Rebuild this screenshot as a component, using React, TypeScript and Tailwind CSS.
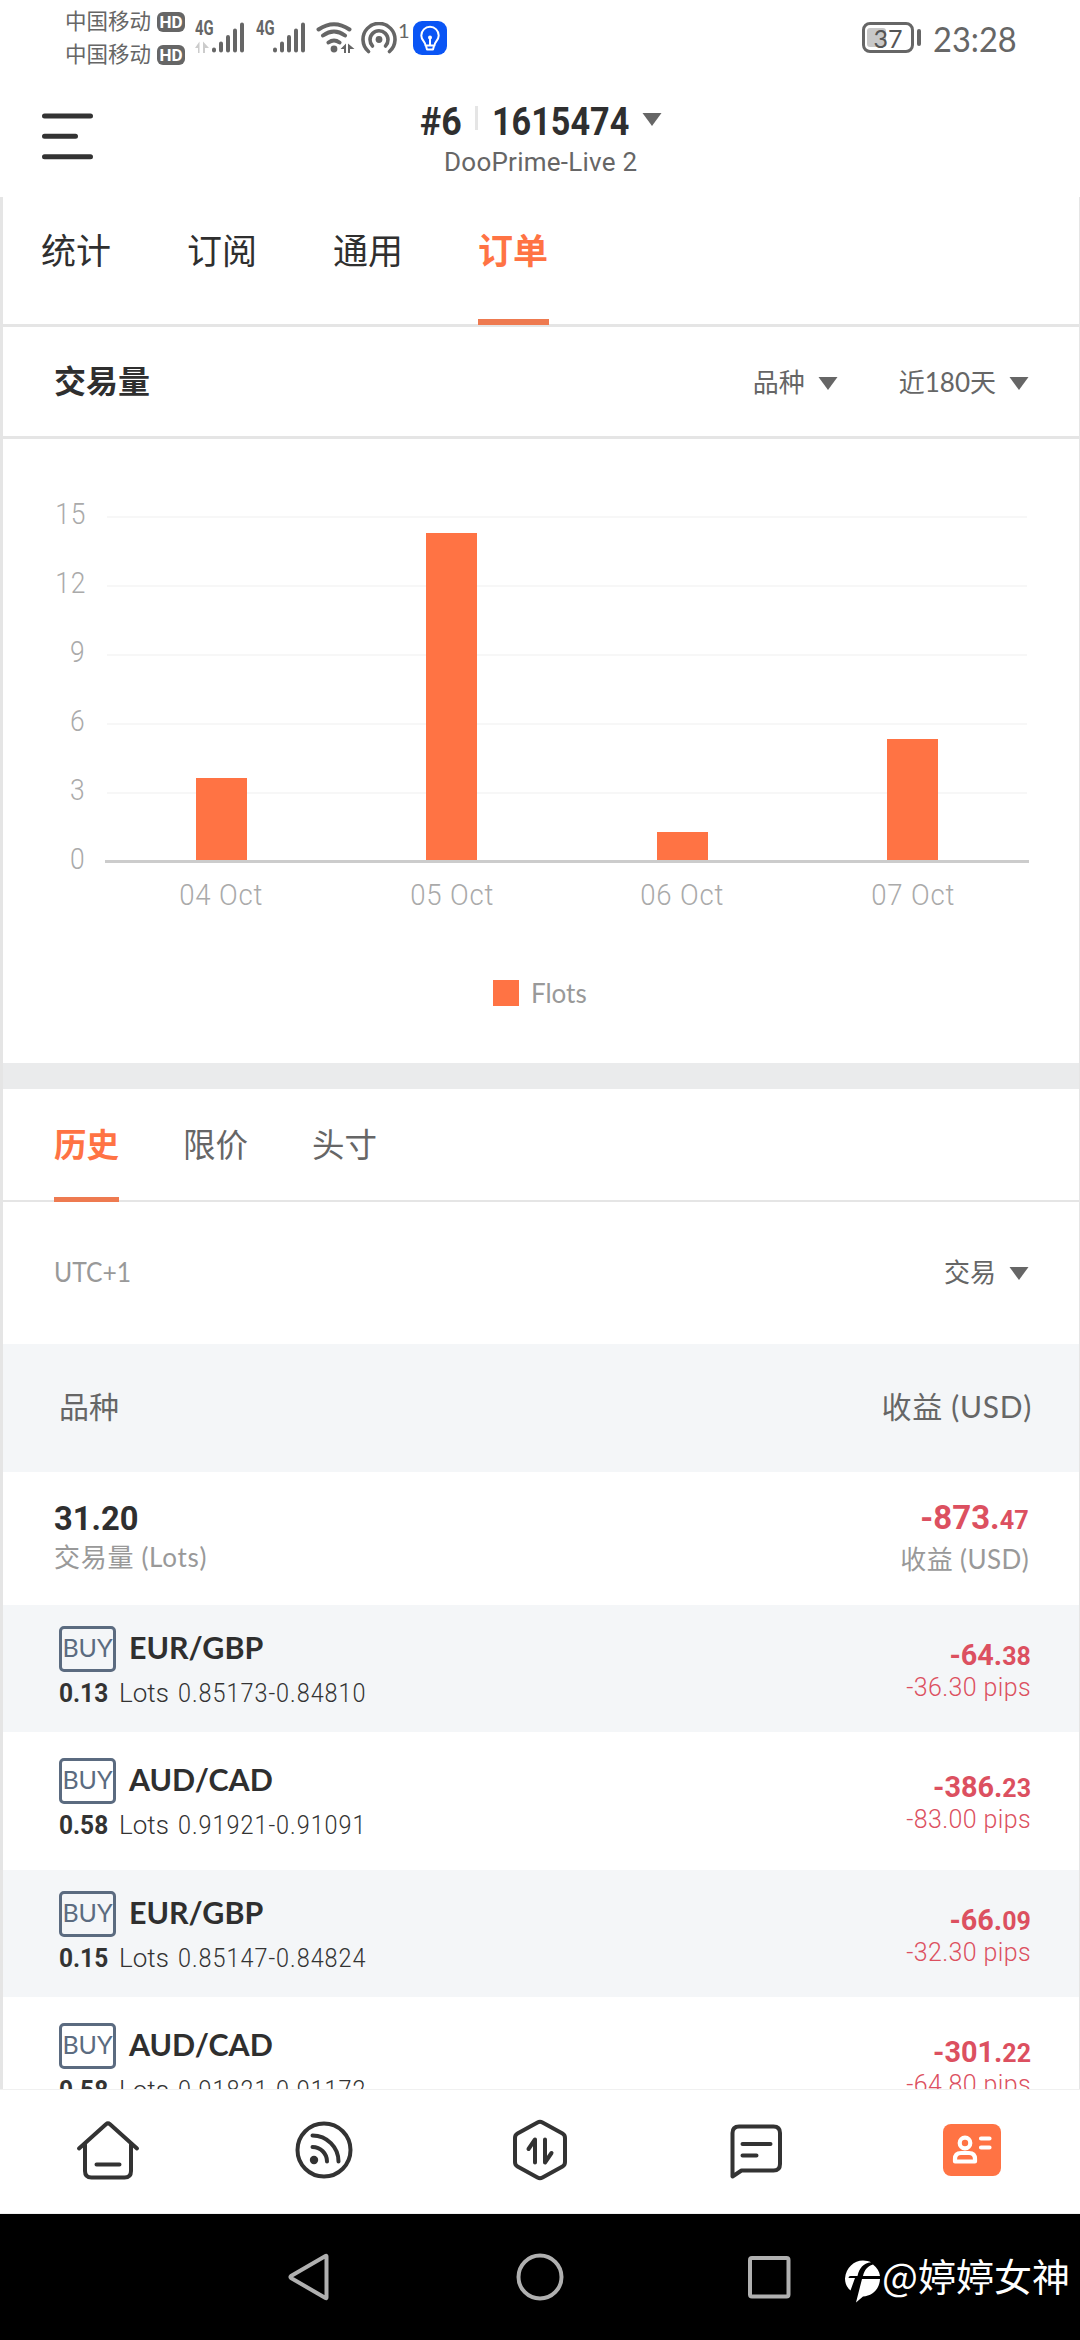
import type { ReactNode } from "react";

const DIN = "font-['Roboto','Noto_Sans_CJK_SC',sans-serif]";
const GEO = "font-['Lato','Noto_Sans_CJK_SC',sans-serif]";

function Caret() {
  return (
    <svg width="20" height="13" viewBox="0 0 20 13" className="shrink-0">
      <path d="M.5 0h19L10 13z" fill="#666" />
    </svg>
  );
}

function Carrier() {
  return (
    <div className="flex h-[33px] items-center">
      <span className="w-[92px] text-[21.5px] leading-[33px] text-[#666]">中国移动</span>
      <span className="flex h-5 w-7 items-center justify-center rounded-[6px] bg-[#666] font-['Roboto',sans-serif] text-[17px] font-bold leading-5 text-white">
        HD
      </span>
    </div>
  );
}

function Signal({ arrows }: { arrows?: boolean }) {
  return (
    <div className="relative h-8 w-[50px]">
      <span className="absolute -top-px left-0 origin-left scale-x-[0.74] font-['Roboto',sans-serif] text-[20px] font-bold leading-[15px] text-[#666]">
        4G
      </span>
      <svg width="50" height="32" viewBox="0 0 50 32" className="absolute left-0 top-0">
        {arrows && <path d="M0 26l4.500-6.500V31H3v-5zM8 19.500l6 6.500H10v5H8z" fill="#ccc" />}
        <g stroke="#666" strokeWidth="4" strokeLinecap="round">
          <path d="M19 27.500v1M26 21.500v7M33 15v13.500M40 8.500v20M47 2.500v26" />
        </g>
      </svg>
    </div>
  );
}

function StatusBar() {
  return (
    <div className={`${GEO} flex h-[75px] items-start pl-[65px]`}>
      <div className="w-[130px] pt-[5px]">
        <Carrier />
        <Carrier />
      </div>
      <div className="flex pt-[22px]">
        <Signal arrows />
        <div className="w-[11px]" />
        <Signal />
        <svg width="40" height="32" viewBox="0 0 40 32" className="ml-[10px]">
          <g fill="none" stroke="#666" strokeWidth="4" strokeLinecap="round">
            <path d="M2.500 7.500Q18 -3 33.500 7.500M7 13.500Q18 5.500 29 13.500M12.500 20.500Q18 16.500 23.500 20.500" />
          </g>
          <circle cx="18" cy="27" r="3.400" fill="#666" />
          <path d="M24.500 27l5.500-5.500V31H28v-4zM32 21.500l6.500 5.500H34v4h-2z" fill="#666" />
        </svg>
        <svg width="38" height="32" viewBox="0 0 38 32" className="ml-[4px]">
          <g fill="none" stroke="#666" strokeWidth="3.600" strokeLinecap="round">
            <path d="M8.500 29.500A16 16 0 1 1 29.500 29.500" />
            <path d="M12.500 24A9 9 0 1 1 25.500 24" />
          </g>
          <circle cx="19" cy="17.500" r="3.400" fill="#666" />
        </svg>
        <span className="w-[15px] text-[20px] leading-[16px] text-[#666]">1</span>
        <svg width="34" height="34" viewBox="0 0 34 34" className="-mt-px">
          <rect width="34" height="34" rx="9" fill="#0a55f5" />
          <g fill="none" stroke="#fff" strokeWidth="2" strokeLinecap="round" strokeLinejoin="round">
            <path d="M12.500 24.500C12.500 20.500 8.300 19.500 8.300 14.500a8.700 8.700 0 0 1 17.400 0c0 5-4.200 6-4.200 10zM13 25l1 3.500h6l1-3.500M17 17.500v6" />
          </g>
          <circle cx="17" cy="16.500" r="2" fill="#fff" />
        </svg>
      </div>
      <div className="ml-auto flex pr-[61px] pt-[22px]">
        <div className="relative h-[31px] w-[52px] rounded-[8px] border-[3px] border-[#666]">
          <div className="absolute left-[2px] top-[3px] h-[19px] w-[19px] rounded-[3px] bg-[#c8c8c8]" />
          <span className="absolute inset-0 text-center text-[25px] leading-[26px] text-[#555]">37</span>
        </div>
        <div className="ml-[3px] mt-[7px] h-[17px] w-1 rounded-[2px] bg-[#666]" />
        <span className="-mt-px ml-3 w-[86px] origin-left scale-x-[0.93] whitespace-nowrap text-[35px] leading-[34px] text-[#666]">
          23:28
        </span>
      </div>
    </div>
  );
}

function Header() {
  return (
    <div className={`${DIN} relative flex h-[122px] items-start justify-between`}>
      <svg width="51" height="48" viewBox="0 0 51 48" className="ml-[42px] mt-[37px]">
        <path d="M2.500 4h46M2.500 24.300h31M2.500 44.700h46" stroke="#333" strokeWidth="5" strokeLinecap="round" />
      </svg>
      <div className="absolute left-[420px] top-[27px] flex w-[250px] flex-col">
        <div className="flex h-[40px] items-center text-[38px] font-bold leading-[40px] text-[#2f2f2f]">
          <span className="w-[55px] origin-left scale-x-[0.94]">#6</span>
          <span className="-mt-2 h-6 w-[3px] bg-[#e5e5e5]" />
          <span className="ml-[14px] w-[150px] origin-left scale-x-[0.9]">1615474</span>
          <span className="-mt-1.5">
            <Caret />
          </span>
        </div>
        <span className="ml-6 mt-[4px] whitespace-nowrap text-[26px] leading-8 tracking-[0.25px] text-[#666]">
          DooPrime-Live 2
        </span>
      </div>
    </div>
  );
}

const TABS = ["统计", "订阅", "通用", "订单"];

function MainTabs() {
  return (
    <div className={`${GEO} flex h-[130px] shrink-0 gap-[76px] whitespace-nowrap border-b-[3px] border-[#e5e5e5] pl-[37px] text-[35px] leading-[50px]`}>
      {TABS.map((t, i) => (
        <div
          key={t}
          className={
            i === 3
              ? "h-[128px] w-[71px] border-b-[6px] border-[#ee7a50] pt-[28px] font-bold text-[#ff7344]"
              : "h-[128px] w-[70px] pl-px pt-[28px] text-[#2f2f2f]"
          }
        >
          {t}
        </div>
      ))}
    </div>
  );
}

function Filter({ children }: { children: ReactNode }) {
  return (
    <div className="flex items-center gap-[13px] text-[26px] leading-[40px] text-[#666]">
      <span>{children}</span>
      <span className="mt-[3px]">
        <Caret />
      </span>
    </div>
  );
}

const BARS = [
  { label: "04 Oct", h: 82 },
  { label: "05 Oct", h: 327 },
  { label: "06 Oct", h: 28 },
  { label: "07 Oct", h: 121 },
];

function Chart() {
  return (
    <div className="h-[624px] shrink-0">
      <div className={`${DIN} flex pt-[52px] text-[30px] font-light text-[#aaa]`}>
        <div className="flex w-[82px] flex-col items-end">
          {["15", "12", "9", "6", "3", "0"].map((n) => (
            <span key={n} className="-mr-px block h-[69px] origin-right scale-x-[0.88] leading-[46px] tracking-[1px]">
              {n}
            </span>
          ))}
        </div>
        <div className="ml-[20px] mt-[25px] w-[924px]">
          <div className="relative h-[347px] border-b-[3px] border-[#ccc]">
            <div className="mx-[2px]">
              {[0, 1, 2, 3, 4].map((n) => (
                <div key={n} className="h-[69px] border-t-2 border-[#f7f7f7]" />
              ))}
            </div>
            <div className="absolute inset-0 flex items-end px-[1px]">
              {BARS.map((b) => (
                <div key={b.label} className="flex flex-1 justify-center">
                  <div className="w-[51px] bg-[#ff7344]" style={{ height: b.h }} />
                </div>
              ))}
            </div>
          </div>
          <div className="mt-[12px] flex px-[1px] text-center leading-[40px]">
            {BARS.map((b) => (
              <span key={b.label} className="flex-1 scale-x-[0.92] tracking-[0.9px]">
                {b.label}
              </span>
            ))}
          </div>
        </div>
      </div>
      <div className={`${GEO} mt-[58px] flex items-center pl-[490px] text-[26px] leading-[40px] text-[#999]`}>
        <span className="h-[26px] w-[26px] bg-[#ff7344]" />
        <span className="ml-3">Flots</span>
      </div>
    </div>
  );
}

function SubTabs() {
  return (
    <div className={`${GEO} flex h-[113px] shrink-0 gap-[64px] whitespace-nowrap border-b-2 border-[#e5e5e5] pl-[51px] text-[32.5px] leading-[50px]`}>
      <div className="h-[113px] w-[65px] border-b-[5px] border-[#ee7a50] pt-[31px] font-bold text-[#ff7344]">历史</div>
      <div className="w-[65px] pt-[31px] text-[#666]">限价</div>
      <div className="w-[65px] pt-[31px] text-[#666]">头寸</div>
    </div>
  );
}

interface Order {
  pair: string;
  lots: string;
  range: string;
  profit: string;
  cents: string;
  pips: string;
}

const ORDERS: Order[] = [
  { pair: "EUR/GBP", lots: "0.13", range: "0.85173-0.84810", profit: "-64.", cents: "38", pips: "-36.30 pips" },
  { pair: "AUD/CAD", lots: "0.58", range: "0.91921-0.91091", profit: "-386.", cents: "23", pips: "-83.00 pips" },
  { pair: "EUR/GBP", lots: "0.15", range: "0.85147-0.84824", profit: "-66.", cents: "09", pips: "-32.30 pips" },
  { pair: "AUD/CAD", lots: "0.58", range: "0.91821-0.91172", profit: "-301.", cents: "22", pips: "-64.80 pips" },
];

function OrderRow({ o, shaded }: { o: Order; shaded: boolean }) {
  return (
    <div
      className={
        shaded
          ? "flex h-[127px] shrink-0 justify-between bg-[#f4f6f8] pl-[56px] pr-[48px] pt-[21px]"
          : "flex h-[138px] shrink-0 justify-between bg-white pl-[56px] pr-[48px] pt-[26px]"
      }
    >
      <div>
        <div className={`${GEO} flex h-[46px]`}>
          <span className="flex h-[46px] w-[57px] justify-center rounded-[5px] border-[3px] border-[#5b6b80] text-[25px] leading-[37px] text-[#5b6b80]">
            BUY
          </span>
          <span className="ml-[13px] origin-left scale-x-[0.98] text-[31px] font-bold leading-[43px] text-[#2f2f2f]">
            {o.pair}
          </span>
        </div>
        <div className={`${DIN} mt-[5px] flex whitespace-nowrap text-[26px] leading-[32px] text-[#333]`}>
          <span className="w-[60px] origin-left scale-x-[0.94] font-bold">{o.lots}</span>
          <span className="w-[59px] font-light">Lots</span>
          <span className="origin-left scale-x-[0.9] font-light tracking-[1.1px]">{o.range}</span>
        </div>
      </div>
      <div className={`${DIN} flex flex-col items-end pt-[12px] text-[#dc5060]`}>
        <span className="origin-right scale-x-[0.96] text-[30px] font-bold leading-[34px]">
          {o.profit}
          <span className="text-[26px]">{o.cents}</span>
        </span>
        <span className="origin-right scale-x-[0.96] text-[26px] font-light leading-[28px] tracking-[0.4px]">{o.pips}</span>
      </div>
    </div>
  );
}

function Content() {
  return (
    <div className="flex h-[1892px] flex-col overflow-hidden border-l-[3px] border-r border-[#e5e5e5]">
      <MainTabs />
      <div className={`${GEO} flex h-[112px] shrink-0 items-center border-b-[3px] border-[#e5e5e5] pl-[51px] pr-[50px]`}>
        <span className="-mt-[2px] text-[32px] font-bold leading-[46px] text-[#2f2f2f]">交易量</span>
        <div className="ml-auto flex gap-[61px]">
          <Filter>品种</Filter>
          <Filter>近180天</Filter>
        </div>
      </div>
      <Chart />
      <div className="h-[26px] shrink-0 bg-[#eaebec]" />
      <SubTabs />
      <div className={`${GEO} flex h-[142px] shrink-0 items-center justify-between pb-[2px] pl-[51px] pr-[50px] text-[26px] text-[#999]`}>
        <span className="origin-left scale-x-[0.95]">UTC+1</span>
        <Filter>交易</Filter>
      </div>
      <div className={`${GEO} flex h-[128px] shrink-0 items-center justify-between bg-[#f4f6f8] pb-[4px] pl-[56px] pr-[47px] text-[30px] text-[#666]`}>
        <span>品种</span>
        <span className="tracking-[0.7px]">收益 (USD)</span>
      </div>
      <div className="flex h-[133px] shrink-0 justify-between pl-[51px] pr-[50px] pt-[26px]">
        <div className="flex flex-col">
          <span className={`${DIN} origin-left scale-x-[0.96] text-[34px] font-bold leading-[40px] text-[#2f2f2f]`}>31.20</span>
          <span className={`${GEO} text-[26px] leading-[38px] tracking-[0.7px] text-[#999]`}>交易量 (Lots)</span>
        </div>
        <div className="flex flex-col items-end">
          <span className={`${DIN} origin-right scale-x-[0.97] text-[34px] font-bold leading-[39px] text-[#dc5060]`}>
            -873.<span className="text-[26px]">47</span>
          </span>
          <span className={`${GEO} text-[26px] leading-[38px] tracking-[0.4px] text-[#999]`}>收益 (USD)</span>
        </div>
      </div>
      {ORDERS.map((o, i) => (
        <OrderRow key={i} o={o} shaded={i % 2 === 0} />
      ))}
    </div>
  );
}

function BottomNav() {
  return (
    <div className="flex h-[125px] items-start border-b border-t border-[#f0f0f0] bg-white pt-[26px]">
      <div className="flex flex-1 justify-center">
        <svg width="64" height="68" viewBox="0 0 64 68" fill="none" stroke="#333" strokeWidth="4" strokeLinecap="round" strokeLinejoin="round">
          <path d="M3 32.500L30 8.200q2-1.700 4 0L61 32.500" />
          <path d="M9 28.500V55q0 6.500 6.500 6.500h33q6.500 0 6.500-6.500V28.500M20.500 48.500h23" />
        </svg>
      </div>
      <div className="flex flex-1 justify-center">
        <svg width="64" height="68" viewBox="0 0 64 68" fill="none" stroke="#333" strokeWidth="4" strokeLinecap="round">
          <circle cx="32" cy="34" r="26.500" />
          <path d="M20.500 19.500A26 26 0 0 1 46.500 45.500M20.500 31A14.500 14.500 0 0 1 35 45.500" />
          <circle cx="22" cy="44" r="4.200" fill="#333" stroke="none" />
        </svg>
      </div>
      <div className="flex flex-1 justify-center">
        <svg width="64" height="68" viewBox="0 0 64 68" fill="none" stroke="#333" strokeWidth="4" strokeLinecap="round" strokeLinejoin="round">
          <path d="M29.500 6.500q2.500-1.400 5 0L54.500 17.500q2.500 1.400 2.500 4.500V46q0 3.100-2.500 4.500L34.500 61.500q-2.500 1.400-5 0L9.500 50.500Q7 49.100 7 46V22q0-3.100 2.500-4.500z" />
          <path d="M20.500 33l6.500-9.500V46.500M37 23.500V46.500l6.500-9.500" />
        </svg>
      </div>
      <div className="flex flex-1 justify-center">
        <svg width="64" height="68" viewBox="0 0 64 68" fill="none" stroke="#333" strokeWidth="4" strokeLinecap="round" strokeLinejoin="round">
          <path d="M8.500 60.500V17q0-6.500 6.500-6.500H49.500q6.500 0 6.500 6.500V48q0 6.500-6.500 6.500H17.500z" />
          <path d="M18.500 28h28M18.500 39.500h14" />
        </svg>
      </div>
      <div className="flex flex-1 justify-center">
        <svg width="64" height="68" viewBox="0 0 64 68" fill="none" stroke="#fff" strokeWidth="4.200" strokeLinecap="round" strokeLinejoin="round">
          <rect x="3" y="8" width="58" height="52" rx="8" fill="#ff7344" stroke="none" />
          <circle cx="25" cy="27" r="5.300" />
          <path d="M15 45.500V43q0-6 6-6H29q6 0 6 6v2.500zM41 22.500h8.500M41 31.500h8.500" />
        </svg>
      </div>
    </div>
  );
}

function SystemBar() {
  return (
    <div className="relative h-[126px] bg-black">
      <div className="flex h-[126px] items-center gap-[184px] pl-[286px]">
        <svg width="46" height="50" viewBox="0 0 46 50" fill="none" stroke="#b0b0b0" strokeWidth="4" strokeLinejoin="round">
          <path d="M40.500 4.500V45.500q0 1-1 .500L5 26q-1.200-1 0-2L39.500 4q1-.500 1 .500z" />
        </svg>
        <svg width="48" height="50" viewBox="0 0 48 50" fill="none" stroke="#b0b0b0" strokeWidth="4">
          <circle cx="24" cy="25" r="21.500" />
        </svg>
        <svg width="43" height="50" viewBox="0 0 43 50" fill="none" stroke="#b0b0b0" strokeWidth="4">
          <rect x="2" y="6" width="38.500" height="38.500" rx="2" />
        </svg>
      </div>
      <div className="absolute left-[844px] top-[41px] flex items-start whitespace-nowrap font-['Noto_Sans_CJK_SC',sans-serif] text-[38px] leading-[40px] text-white">
        <svg width="38" height="46" viewBox="0 0 38 46" className="mt-[4px]">
          <path
            d="M1 19.500C2 8.500 10 1.500 19 1.500c3 0 6 .700 8 1.800C19 4.500 15.500 9 13.500 17H6.500q-2 0-2 2H11L6.500 31.500C3 28.500 1 24.500 1 19.500zM36 17H19c1.500-6 4-9.500 10-11.500C33 8.500 35.500 12.500 36 17zM18 20H36c-.500 10.500-8 17-17 17.500L12 43.500z"
            fill="#fff"
          />
        </svg>
        <span>@婷婷女神</span>
      </div>
    </div>
  );
}

export default function App() {
  return (
    <div className="h-[2340px] w-[1080px] overflow-hidden bg-white">
      <StatusBar />
      <Header />
      <Content />
      <BottomNav />
      <SystemBar />
    </div>
  );
}
